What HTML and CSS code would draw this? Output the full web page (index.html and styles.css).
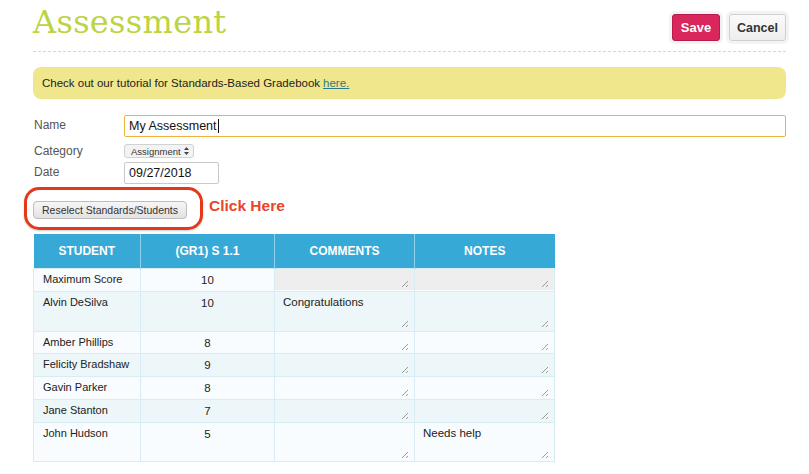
FILE: index.html
```html
<!DOCTYPE html>
<html>
<head>
<meta charset="utf-8">
<link rel="stylesheet" href="styles.css">
</head>
<body>
<div class="page">
  <header class="top">
    <h1 class="title">Assessment</h1>
    <div class="actions">
      <button class="btn btn-save">Save</button>
      <button class="btn btn-cancel">Cancel</button>
    </div>
  </header>

  <div class="banner">Check out our tutorial for Standards-Based Gradebook <a href="#">here.</a></div>

  <div class="form">
    <label class="lbl lbl-name">Name</label>
    <div class="field"><div class="input input-name">My Assessment<span class="caret"></span></div></div>
    <label class="lbl lbl-cat">Category</label>
    <div class="field"><div class="select">Assignment<svg class="arrows" width="5" height="8" viewBox="0 0 5 8"><path d="M2.5 0 L5 3 L0 3 Z M0 5 L5 5 L2.5 8 Z" fill="#444"/></svg></div></div>
    <label class="lbl lbl-date">Date</label>
    <div class="field"><div class="input input-date">09/27/2018</div></div>
  </div>

  <div class="reselect-row">
    <div class="highlight">
      <button class="btn-reselect">Reselect Standards/Students</button>
    </div>
    <span class="click-here">Click Here</span>
  </div>

  <table class="grid">
    <thead>
      <tr><th class="c1">STUDENT</th><th class="c2">(GR1) S 1.1</th><th class="c3">COMMENTS</th><th class="c4">NOTES</th></tr>
    </thead>
    <tbody>
      <tr class="r h23"><td class="name">Maximum Score</td><td class="score">10</td><td class="ta dis"><div class="box"><i class="grip"></i></div></td><td class="ta dis"><div class="box"><i class="grip"></i></div></td></tr>
      <tr class="r alt h40"><td class="name">Alvin DeSilva</td><td class="score">10</td><td class="ta"><div class="box">Congratulations<i class="grip"></i></div></td><td class="ta"><div class="box"><i class="grip"></i></div></td></tr>
      <tr class="r h22"><td class="name">Amber Phillips</td><td class="score">8</td><td class="ta"><div class="box"><i class="grip"></i></div></td><td class="ta"><div class="box"><i class="grip"></i></div></td></tr>
      <tr class="r alt h23"><td class="name">Felicity Bradshaw</td><td class="score">9</td><td class="ta"><div class="box"><i class="grip"></i></div></td><td class="ta"><div class="box"><i class="grip"></i></div></td></tr>
      <tr class="r h23"><td class="name">Gavin Parker</td><td class="score">8</td><td class="ta"><div class="box"><i class="grip"></i></div></td><td class="ta"><div class="box"><i class="grip"></i></div></td></tr>
      <tr class="r alt h23"><td class="name">Jane Stanton</td><td class="score">7</td><td class="ta"><div class="box"><i class="grip"></i></div></td><td class="ta"><div class="box"><i class="grip"></i></div></td></tr>
      <tr class="r h39"><td class="name">John Hudson</td><td class="score">5</td><td class="ta"><div class="box"><i class="grip"></i></div></td><td class="ta"><div class="box">Needs help<i class="grip"></i></div></td></tr>
    </tbody>
  </table>
</div>
</body>
</html>
```

FILE: styles.css
```css
* { box-sizing: border-box; }
html, body { margin: 0; padding: 0; background: #fff; }
body {
  font-family: "Liberation Sans", Arial, sans-serif;
  color: #222;
  width: 809px;
  height: 474px;
  overflow: hidden;
}
.page { padding: 0 23px 0 33px; }

.top {
  display: flex;
  justify-content: space-between;
  align-items: flex-start;
  height: 52px;
  border-bottom: 1px dashed #d6d6d6;
}
.title {
  margin: 0;
  padding-top: 3px;
  font-family: "DejaVu Serif", "Liberation Serif", serif;
  font-weight: normal;
  font-size: 32px;
  line-height: 38px;
  color: #bcd443;
  letter-spacing: 0.3px;
}
.actions { display: flex; gap: 9px; padding-top: 14px; }
.btn {
  height: 27px;
  border-radius: 3px;
  font-family: "Liberation Sans", Arial, sans-serif;
  font-weight: bold;
  font-size: 12.5px;
  padding: 0;
  cursor: pointer;
}
.btn-save {
  width: 48px;
  background: #d9265c;
  color: #fff;
  font-size: 13px;
  border: 1px solid #b81a49;
  box-shadow: 0 0 0 3px #f3f3f3;
}
.btn-cancel {
  width: 57px;
  background: linear-gradient(#fafafa, #eeeeee);
  color: #333;
  border: 1px solid #cfcfcf;
  box-shadow: 0 0 0 3px #f3f3f3;
}

.banner {
  margin-top: 15px;
  height: 32px;
  background: #f0e68c;
  border-radius: 8px;
  padding-left: 9px;
  display: flex;
  align-items: center;
  font-size: 11.5px;
  color: #222;
}
.banner a { color: #2c7a86; text-decoration: underline; margin-left: 3px; }

.form {
  margin-top: 16px;
  display: grid;
  grid-template-columns: 91px 1fr;
  grid-template-rows: 22px 13px 22px;
  row-gap: 6px;
}
.field { display: flex; align-items: flex-start; }
.lbl { font-size: 12px; line-height: 14px; color: #555; padding-left: 1px; }
.lbl-name { padding-top: 3px; }
.lbl-cat { padding-top: 1px; }
.lbl-date { padding-top: 3px; }
.input {
  height: 22px;
  width: 100%;
  border: 1px solid #c9c9c9;
  border-radius: 2px;
  font-size: 12.5px;
  color: #111;
  padding: 3px 4px 0;
  background: #fff;
}
.input-name { border-color: #f0b23e; display: flex; align-items: flex-start; }
.caret { display: inline-block; width: 1px; height: 14px; background: #111; margin-left: 1px; }
.input-date { width: 95px; }
.select {
  display: inline-flex;
  align-items: center;
  height: 14px;
  padding: 0 4px 0 6px;
  background: #f3f3f3;
  border: 1px solid #d2d2d2;
  border-radius: 3px;
  font-size: 9.5px;
  color: #333;
  margin-top: 1px;
}
.arrows { margin-left: 3px; }

.reselect-row {
  display: flex;
  align-items: center;
  margin-top: 3px;
  margin-left: -9px;
}
.highlight {
  width: 179px;
  height: 43px;
  border: 3px solid #e2391d;
  border-radius: 15px;
  padding: 11px 0 0 6px;
  box-shadow: 0 1px 2px rgba(0,0,0,0.2);
}
.btn-reselect {
  width: 154px;
  height: 18px;
  padding: 0;
  border: 1px solid #bdbdbd;
  border-radius: 4px;
  background: linear-gradient(#f6f6f6, #e2e2e2);
  font-family: "Liberation Sans", Arial, sans-serif;
  font-size: 10.5px;
  color: #333;
  display: block;
}
.click-here {
  margin-left: 6px;
  margin-top: -6px;
  font-weight: bold;
  font-size: 15.5px;
  color: #e8452c;
}

.grid {
  margin-top: 4px;
  border-collapse: collapse;
  table-layout: fixed;
  width: 521px;
  font-size: 11px;
  color: #222;
}
.grid th {
  height: 34px;
  background: #36a9d6;
  color: #fff;
  font-weight: bold;
  font-size: 12px;
  text-align: center;
  border-left: 1px solid #8fd0ea;
  padding: 0;
}
.grid th:first-child { border-left: none; }
.c1 { width: 107px; }
.c2 { width: 134px; }
.c3 { width: 140px; }
.c4 { width: 140px; }
.grid td {
  border: 1px solid #d8ecf4;
  padding: 0;
  vertical-align: top;
  background: #f9fcfe;
}
.grid tr.alt td { background: #edf6f9; }
.h22 td { height: 22px; }
.h23 td { height: 23px; }
.h39 td { height: 39px; }
.h40 td { height: 40px; }
.name { padding: 4px 0 0 9px !important; }
.score { text-align: center; padding-top: 5px !important; font-size: 11.5px; }
.ta { position: relative; }
.box {
  position: relative;
  height: 100%;
  min-height: 21px;
  padding: 4px 8px 0;
  font-size: 11.5px;
}
.h40 .box, .h39 .box { height: 38px; }
.h22 .box { height: 21px; }
.h23 .box { height: 22px; }
.dis .box { background: #eeeeee; height: 21px; }
.grip {
  position: absolute;
  right: 6px;
  bottom: 3px;
  width: 6px;
  height: 6px;
  background:
    linear-gradient(135deg, transparent 0 46%, #9a9a9a 46% 54%, transparent 54% 100%),
    linear-gradient(135deg, transparent 0 76%, #9a9a9a 76% 84%, transparent 84% 100%);
}
```
